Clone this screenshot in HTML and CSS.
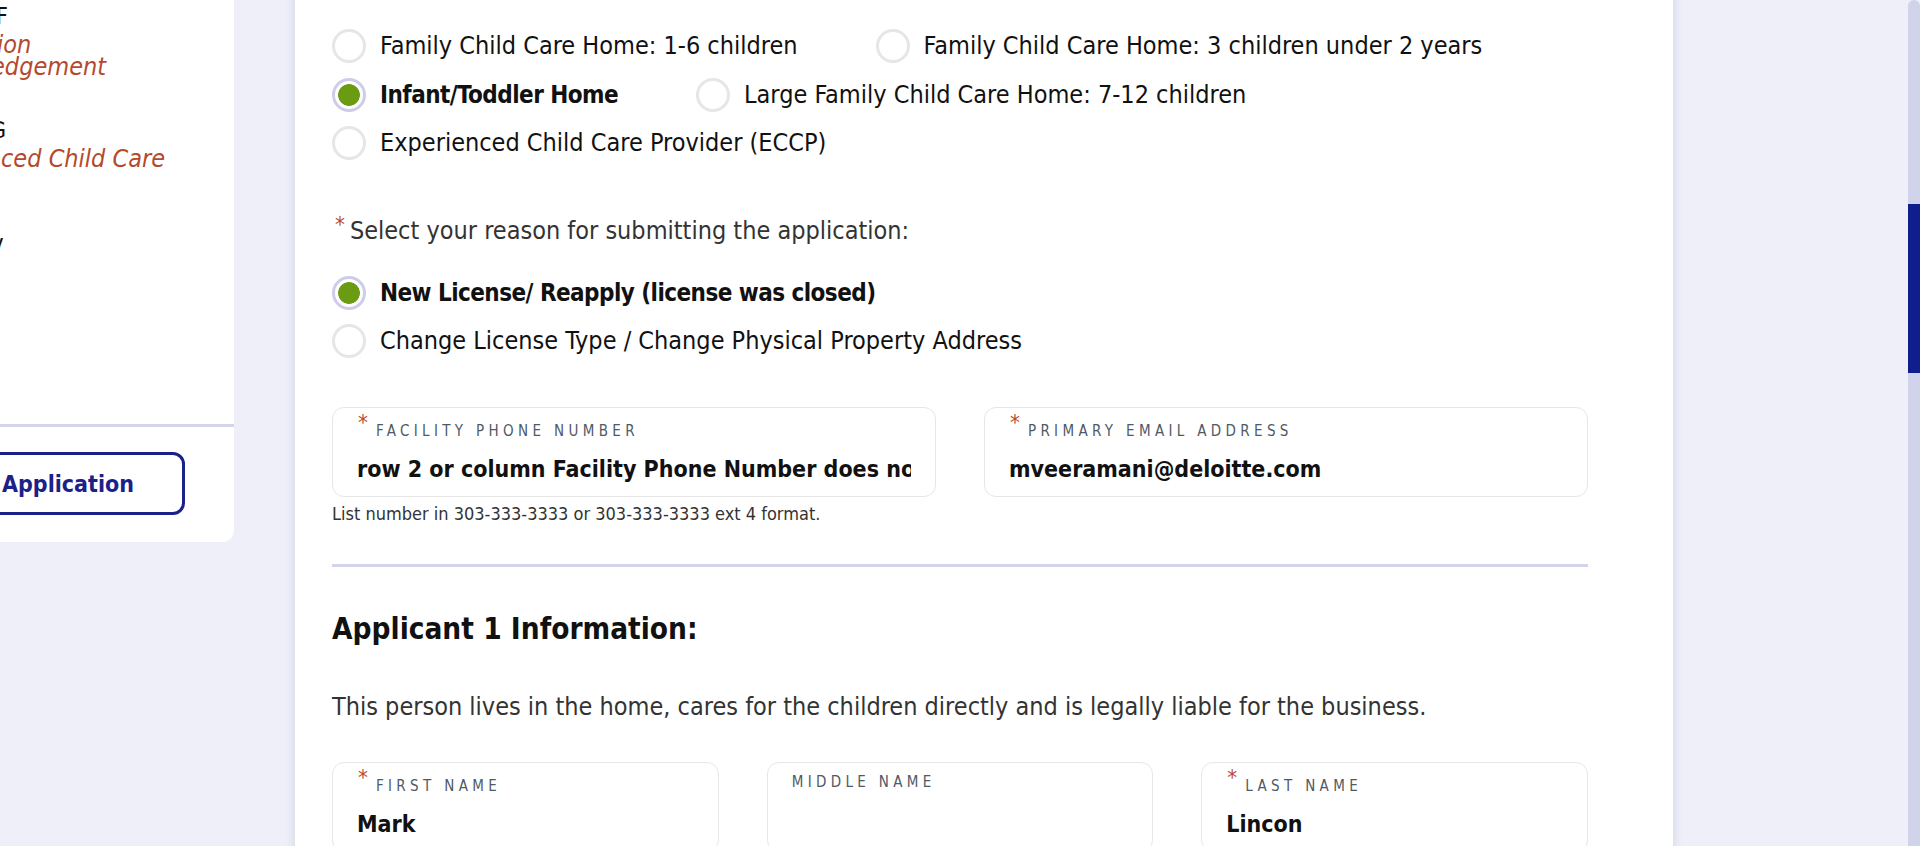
FILE: index.html
```html
<!DOCTYPE html>
<html lang="en">
<head>
<meta charset="utf-8">
<title>Child Care License Application</title>
<link rel="stylesheet" href="styles.css">
</head>
<body>
<div class="page">
  <aside class="sidebar">
    <nav class="steps">
      <div class="step">
        <div class="step-title cut-f">F</div>
        <div class="step-sub"><span class="cut-a">ion</span><br><span class="cut-b">edgement</span></div>
      </div>
      <div class="step">
        <div class="step-title cut-g">G</div>
        <div class="step-sub step-sub--two"><span class="cut-c">ced Child Care</span></div>
      </div>
      <div class="step">
        <div class="step-title cut-v">V</div>
      </div>
    </nav>
    <div class="sidebar-footer">
      <button class="btn-outline" type="button">Application</button>
    </div>
  </aside>

  <main class="card">
    <div class="radio-group radio-group--wrap">
      <label class="radio"><span class="radio-dot"></span><span class="radio-label">Family Child Care Home: 1-6 children</span></label>
      <label class="radio"><span class="radio-dot"></span><span class="radio-label">Family Child Care Home: 3 children under 2 years</span></label>
      <label class="radio is-checked"><span class="radio-dot"></span><span class="radio-label">Infant/Toddler Home</span></label>
      <label class="radio"><span class="radio-dot"></span><span class="radio-label">Large Family Child Care Home: 7-12 children</span></label>
      <label class="radio"><span class="radio-dot"></span><span class="radio-label">Experienced Child Care Provider (ECCP)</span></label>
    </div>

    <p class="question"><span class="req">*</span>Select your reason for submitting the application:</p>

    <div class="radio-group radio-group--stack">
      <label class="radio is-checked"><span class="radio-dot"></span><span class="radio-label">New License/ Reapply (license was closed)</span></label>
      <label class="radio"><span class="radio-dot"></span><span class="radio-label">Change License Type / Change Physical Property Address</span></label>
    </div>

    <div class="field-grid field-grid--two">
      <div class="field-wrap">
        <div class="field">
          <span class="field-label field-label--req"><span class="req">*</span>Facility Phone Number</span>
          <div class="field-value">row 2 or column Facility Phone Number does not exist</div>
        </div>
        <p class="hint">List number in 303-333-3333 or 303-333-3333 ext 4 format.</p>
      </div>
      <div class="field-wrap">
        <div class="field">
          <span class="field-label field-label--req"><span class="req">*</span>Primary Email Address</span>
          <div class="field-value">mveeramani@deloitte.com</div>
        </div>
      </div>
    </div>

    <hr class="divider">

    <h2 class="section-title">Applicant 1 Information:</h2>
    <p class="section-text">This person lives in the home, cares for the children directly and is legally liable for the business.</p>

    <div class="field-grid field-grid--three">
      <div class="field">
        <span class="field-label field-label--req"><span class="req">*</span>First Name</span>
        <div class="field-value">Mark</div>
      </div>
      <div class="field">
        <span class="field-label">Middle Name</span>
        <div class="field-value"></div>
      </div>
      <div class="field">
        <span class="field-label field-label--req"><span class="req">*</span>Last Name</span>
        <div class="field-value">Lincon</div>
      </div>
    </div>
  </main>
</div>
<div class="scrollbar"><div class="scrollbar-thumb"></div></div>
</body>
</html>
```

FILE: styles.css
```css
* { box-sizing: border-box; }

html, body {
  margin: 0;
  height: 100%;
}

body {
  background: #eeeff9;
  font-family: "DejaVu Sans Condensed", "DejaVu Sans", sans-serif;
  color: #111;
  overflow: hidden;
}

.page {
  display: flex;
  align-items: flex-start;
  gap: 61px;
  height: 846px;
}

/* ---------- Sidebar ---------- */
.sidebar {
  flex: 0 0 254px;
  margin-left: -20px;
  margin-top: -20px;
  background: #fff;
  border-radius: 0 0 12px 12px;
  overflow: hidden;
}

.steps {
  height: 447px;
  padding: 22.5px 0 0 20px;
  border-bottom: 3px solid #d3d4ec;
}

.step { margin-bottom: 38.5px; }

.step-title {
  font-size: 23px;
  line-height: 26px;
  color: #111;
}

.step-sub {
  margin-top: 5.5px;
  font-size: 25px;
  line-height: 22px;
  font-style: italic;
  color: #b5492d;
}

.step-sub--two { min-height: 47px; }

.cut-f { margin-left: -4px; }
.cut-g { margin-left: -10px; }
.cut-v { margin-left: -11px; }
.cut-a { margin-left: -3px; }
.cut-b { margin-left: -9px; }
.cut-c { margin-left: 1px; }

.sidebar-footer {
  padding: 25px 0 27px 0;
}

.btn-outline {
  display: flex;
  align-items: center;
  justify-content: flex-end;
  height: 63px;
  width: 225px;
  margin-left: -20px;
  padding: 0 48px 0 0;
  background: #fff;
  border: 3px solid #1b2189;
  border-radius: 12px;
  color: #1b2189;
  font-family: inherit;
  font-size: 23px;
  font-weight: bold;
  white-space: nowrap;
}

/* ---------- Main card ---------- */
.card {
  flex: 0 0 1378px;
  margin-top: -20px;
  min-height: 920px;
  background: #fff;
  box-shadow: 0 0 10px rgba(40, 40, 100, 0.14);
  padding: 49px 85px 0 37px;
}

.radio-group { display: flex; }

.radio-group--wrap {
  flex-wrap: wrap;
  column-gap: 78px;
  row-gap: 14.5px;
}

.radio-group--stack {
  flex-direction: column;
  row-gap: 13.5px;
  margin-bottom: 49.5px;
}

.radio {
  display: flex;
  align-items: center;
  gap: 14px;
  height: 34px;
}

.radio-dot {
  flex: 0 0 34px;
  width: 34px;
  height: 34px;
  border-radius: 50%;
  border: 3px solid #e6e6e6;
  background: #fff;
}

.radio.is-checked .radio-dot {
  border-color: #cdcdea;
  background: radial-gradient(circle, #6b9b12 0 10.5px, #fff 11.2px);
}

.radio-label {
  font-size: 25px;
  line-height: 28px;
  color: #111;
  white-space: nowrap;
}

.radio.is-checked .radio-label {
  font-size: 24px;
  font-weight: bold;
  letter-spacing: -0.55px;
}

.question {
  margin: 56px 0 30px;
  font-size: 25px;
  line-height: 30px;
  color: #333;
}

.req {
  color: #b9492e;
  font-size: 22px;
  line-height: 0;
  vertical-align: 7px;
}

.question .req {
  margin-left: 3px;
  margin-right: 5px;
}

/* ---------- Fields ---------- */
.field-grid {
  display: grid;
  column-gap: 48px;
}

.field-grid--two { grid-template-columns: minmax(0, 1fr) minmax(0, 1fr); }

.field-grid--three {
  grid-template-columns: minmax(0, 1fr) minmax(0, 1fr) minmax(0, 1fr);
  margin-top: 40px;
}

.field-wrap { min-width: 0; }

.field {
  height: 90px;
  border: 1px solid #e6e6e6;
  border-radius: 12px;
  padding: 9px 24px 0;
  overflow: hidden;
}

.field-label {
  display: block;
  height: 22px;
  font-size: 15px;
  line-height: 20px;
  letter-spacing: 4.35px;
  text-transform: uppercase;
  color: #4f5a64;
  white-space: nowrap;
}

.field-label--req { padding-top: 4px; }

.field-label .req {
  font-size: 22px;
  vertical-align: 6px;
  margin-left: 1px;
  margin-right: 8px;
  letter-spacing: 0;
}

.field-value {
  margin-top: 15px;
  height: 30px;
  font-size: 23px;
  line-height: 30px;
  font-weight: bold;
  color: #111;
  white-space: nowrap;
  overflow: hidden;
}

.hint {
  margin: 6px 0 0;
  font-size: 18px;
  line-height: 22px;
  color: #333;
}

.divider {
  margin: 39px 0 0;
  height: 3px;
  border: 0;
  background: #d3d4ec;
}

.section-title {
  margin: 45px 0 0;
  font-size: 29.5px;
  line-height: 34px;
  font-weight: bold;
  color: #111;
}

.section-text {
  margin: 45.5px 0 0;
  font-size: 25px;
  line-height: 30px;
  color: #333;
}

/* ---------- Fake scrollbar overlay ---------- */
.scrollbar {
  position: fixed;
  top: 0;
  right: 0;
  width: 12px;
  height: 846px;
  background: #d1d3ea;
  border-radius: 6px 6px 0 0;
}

.scrollbar-thumb {
  position: absolute;
  top: 204px;
  left: 0;
  width: 12px;
  height: 169px;
  background: #101d8c;
}
```
